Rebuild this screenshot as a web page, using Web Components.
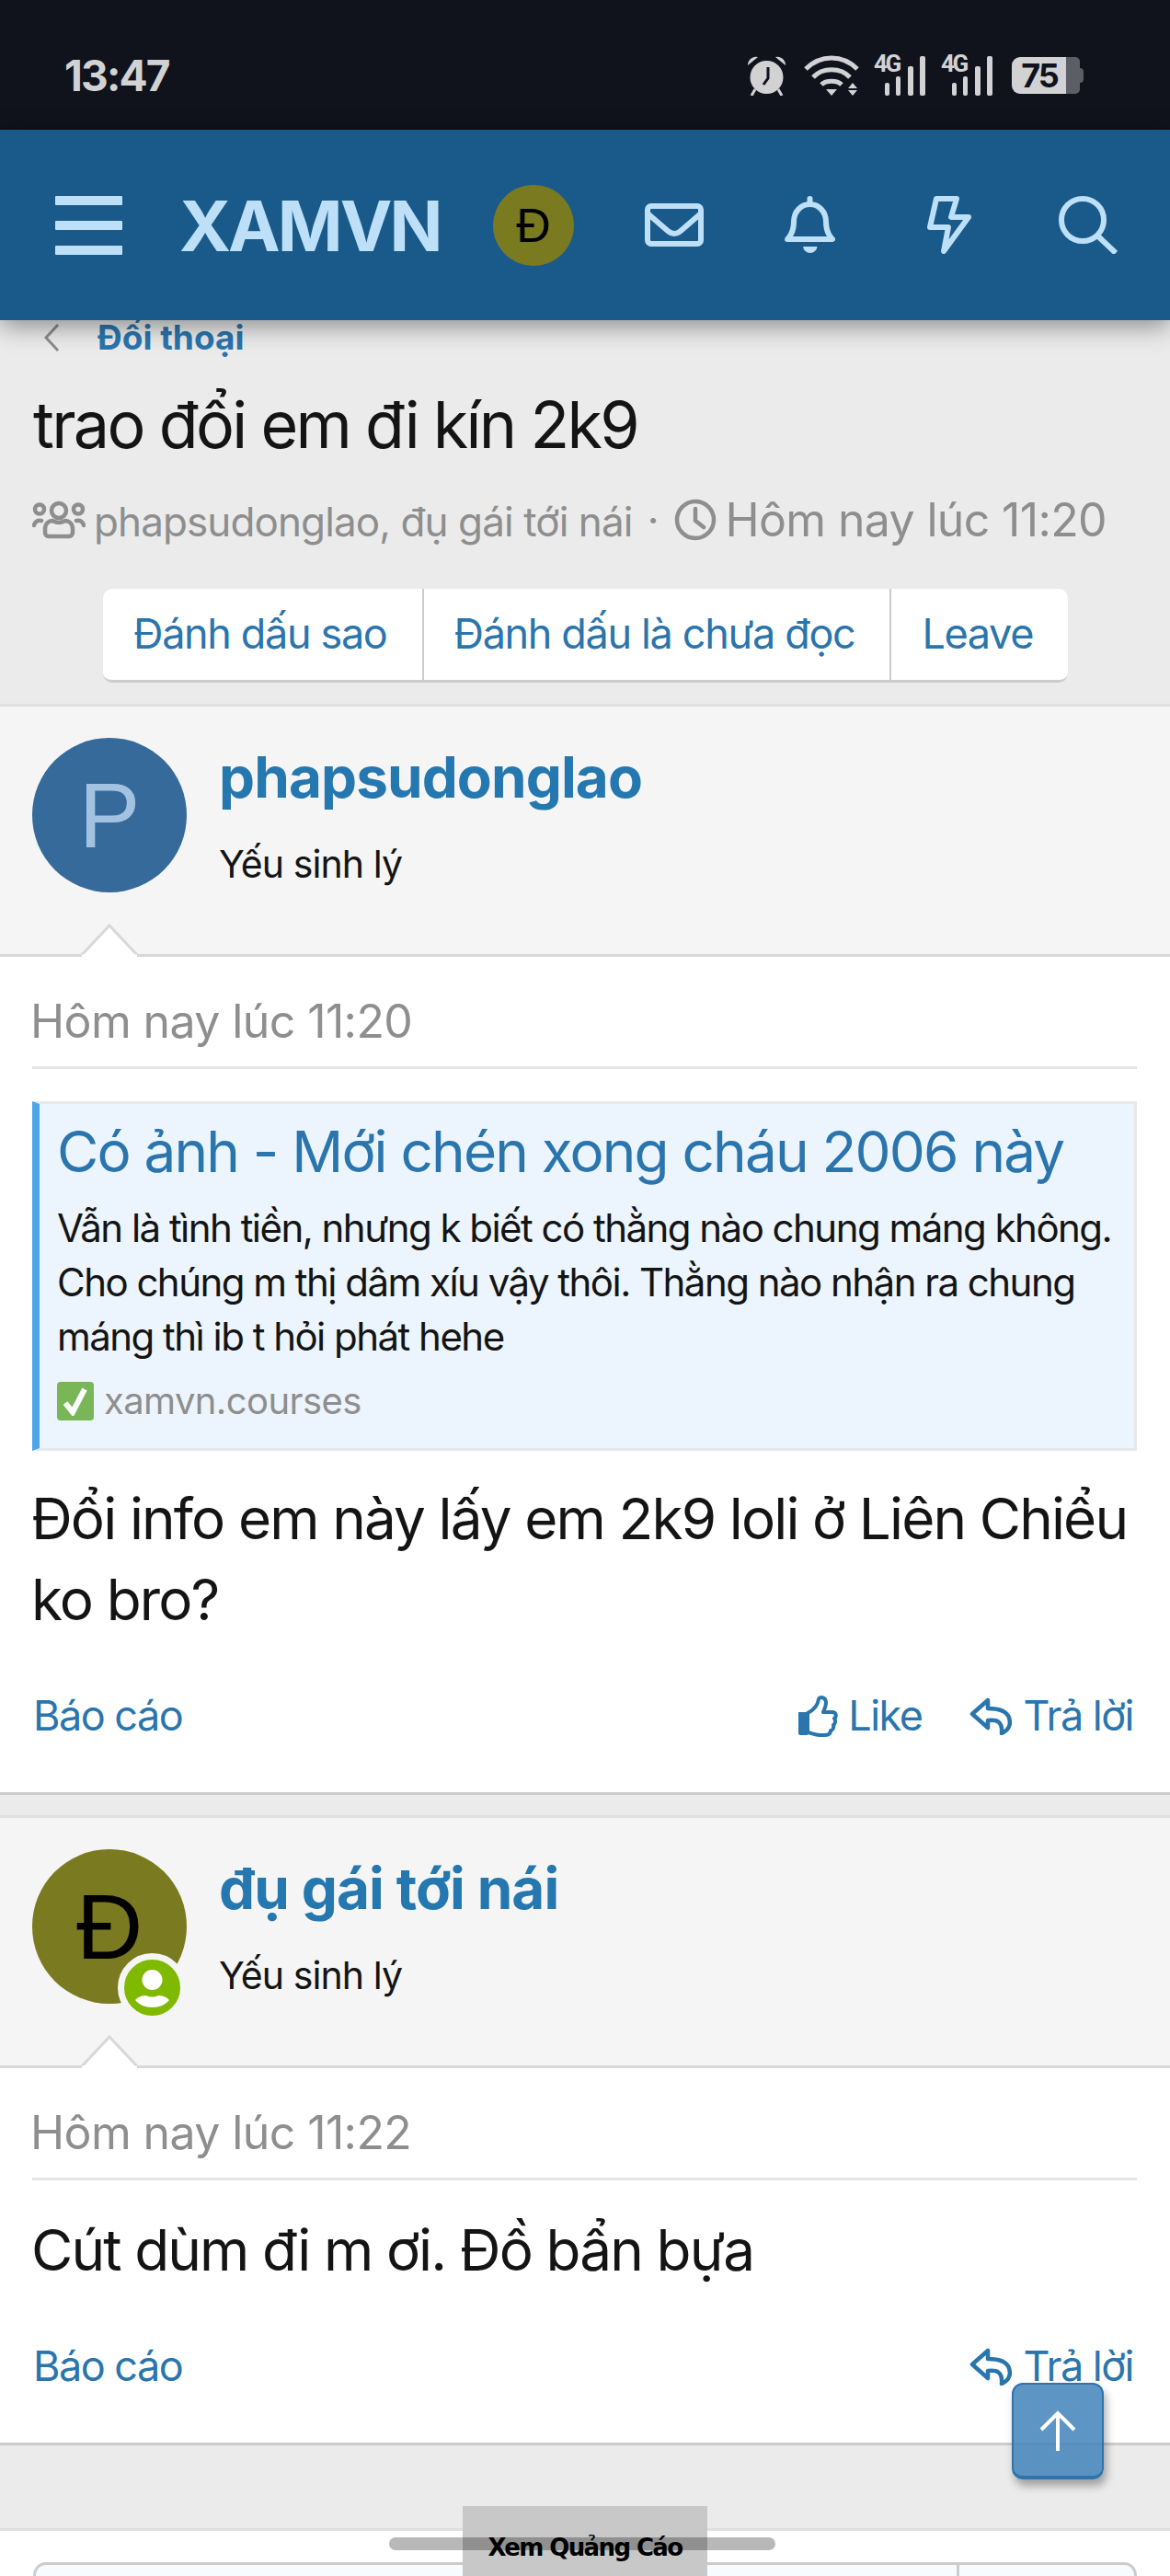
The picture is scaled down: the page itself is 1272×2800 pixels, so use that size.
<!DOCTYPE html>
<html lang="vi">
<head>
<meta charset="utf-8">
<title>trao đổi em đi kín 2k9</title>
<style>
  html, body { margin: 0; padding: 0; background: #ebebeb; }
  body {
    position: relative;
    width: 1272px;
    height: 2800px;
    overflow: hidden;
    font-family: Inter, Roboto, sans-serif;
    color: #141414;
  }
</style>
</head>
<body>
  <status-bar></status-bar>
  <app-header></app-header>
  <thread-head
    crumb="Đối thoại"
    title="trao đổi em đi kín 2k9"
    people="phapsudonglao, đụ gái tới nái"
    when="Hôm nay lúc 11:20"></thread-head>

  <forum-post name="phapsudonglao" rank="Yếu sinh lý" letter="P" tone="blue" when="Hôm nay lúc 11:20" like>
    <link-card
      title="Có ảnh - Mới chén xong cháu 2006 này"
      site="xamvn.courses">Vẫn là tình tiền, nhưng k biết có thằng nào chung máng không. Cho chúng m thị dâm xíu vậy thôi. Thằng nào nhận ra chung máng thì ib t hỏi phát hehe</link-card>
    Đổi info em này lấy em 2k9 loli ở Liên Chiểu ko bro?
  </forum-post>

  <forum-post name="đụ gái tới nái" rank="Yếu sinh lý" letter="Đ" tone="olive" when="Hôm nay lúc 11:22" online>
    Cút dùm đi m ơi. Đồ bẩn bựa
  </forum-post>

  <reply-box></reply-box>
  <page-overlays></page-overlays>

<script>
const ICONS = {
  mail: '<svg viewBox="0 0 64 47" width="64" height="47" fill="none" stroke="currentColor" stroke-width="6" stroke-linejoin="round"><rect x="3" y="3" width="58" height="41" rx="4"/><path d="M3 11l22 19q7 6 14 0l22-19"/></svg>',
  bell: '<svg viewBox="0 0 55 63" width="55" height="63" fill="none" stroke="currentColor" stroke-width="6" stroke-linejoin="round"><path d="M3 47c5-5 7-10 7-19 0-11 8-19 17.500-19S45 17 45 28c0 9 2 14 7 19z"/><path d="M27.500 3v6" stroke-linecap="round"/><path d="M20 55h15.500a7.800 8 0 0 1-15.500 0z" fill="currentColor" stroke="none"/></svg>',
  bolt: '<svg viewBox="0 0 48 63" width="48" height="63" fill="none" stroke="currentColor" stroke-width="6" stroke-linejoin="round"><path d="M10 3h22l-6 20h19L18 60l5-26H3z"/></svg>',
  search: '<svg viewBox="0 0 64 63" width="64" height="63" fill="none" stroke="currentColor" stroke-width="6"><circle cx="26" cy="26" r="23"/><path d="M42 43l20 19"/></svg>',
  users: '<svg viewBox="0 0 58 42" width="58" height="42" fill="none" stroke="currentColor" stroke-width="4.500" stroke-linecap="round"><circle cx="29" cy="11" r="8"/><circle cx="8" cy="9.500" r="5"/><circle cx="50" cy="9.500" r="5"/><path d="M14 35v-4c0-6 4-9 8-9 2 1 4.500 2 7 2s5-1 7-2c4 0 8 3 8 9v4a4 4 0 0 1-4 4H18a4 4 0 0 1-4-4z"/><path d="M2 27c1-4 4-6 8-5M56 27c-1-4-4-6-8-5"/></svg>',
  clock: '<svg viewBox="0 0 46 46" width="46" height="46" fill="none" stroke="currentColor" stroke-width="4.500" stroke-linecap="round"><circle cx="23" cy="23" r="20"/><path d="M23 11v13l9 7"/></svg>',
  thumb: '<svg viewBox="0 0 44 46" width="44" height="46"><path d="M1 19h10v25H3a2 2 0 0 1-2-2z" fill="currentColor"/><path d="M11 20c6-3 11-8 12-15 .500-3 8-3 8 4 0 4-2 7-3 10h10c4 0 5 5 2 7 2 2 1 6-1 7 1 3-1 6-3 6 0 4-3 5-6 5H24c-5 0-8-2-13-3z" fill="none" stroke="currentColor" stroke-width="4" stroke-linejoin="round"/></svg>',
  reply: '<svg viewBox="0 0 47 41" width="47" height="41" fill="none" stroke="currentColor" stroke-width="4.500" stroke-linejoin="round"><path d="M20 3L3 18l17 15v-8c10-1 16 1 15 14 9-4 10-11 8-17-3-8-13-10-23-10z"/></svg>',
};

const SIGNAL = '<svg width="58" height="44" viewBox="0 0 58 44" fill="currentColor"><rect x="12" y="30" width="5" height="14" rx="2"/><rect x="24" y="23" width="5" height="21" rx="2"/><rect x="37" y="12" width="6" height="32" rx="2"/><rect x="50" y="1" width="6" height="43" rx="2"/></svg>';

class StatusBar extends HTMLElement {
  constructor() {
    super();
    this.attachShadow({ mode: 'open' }).innerHTML = `
      <style>
        :host { display: flex; height: 141px; background: #10131c; color: #d2d2d5; padding-left: 70px; align-items: center; box-sizing: border-box; }
        .time { font: 700 46px/1 Inter, sans-serif; margin-top: 22px; width: 741px; letter-spacing: -1.800px; }
        .icons { display: flex; align-items: center; margin-top: 22px; }
        svg { display: block; }
        .net { position: relative; width: 58px; height: 44px; margin-right: 15px; }
        .net b { position: absolute; left: 0; top: -4px; font: 700 26px/1 Roboto, sans-serif; letter-spacing: -2.500px; }
        .net svg { position: absolute; left: 0; top: 0; }
        .batt { display: flex; align-items: center; justify-content: center; width: 74px; height: 40px; border-radius: 9px 5px 5px 9px; box-sizing: border-box; background: linear-gradient(90deg, #d2d2d5 80%, #5c5e66 80%); color: #10131c; font: 700 36px/40px Inter, sans-serif; letter-spacing: -2px; padding-right: 16px; padding-left: 2px; }
        .nub { width: 4px; height: 16px; background: #5c5e66; border-radius: 0 4px 4px 0; }
      </style>
      <div class="time">13:47</div>
      <div class="icons">
        <svg style="margin-right:18px" width="45" height="44" viewBox="0 0 45 44" fill="currentColor"><circle cx="22.500" cy="24" r="18"/><path d="M2 11a9 9 0 0 1 11-9zM43 11a9 9 0 0 0-11-9z"/><path d="M10 37l-4 7M35 37l4 7" stroke="currentColor" stroke-width="3"/><path d="M24 13v12l-5 7" fill="none" stroke="#10131c" stroke-width="3"/></svg>
        <svg style="margin-right:16px" width="60" height="44" viewBox="0 0 60 44" fill="none" stroke="currentColor" stroke-width="5"><path d="M2 15c16-16 40-16 56 0M10 24c10-11 30-11 40 0M19 32c5-5 17-5 22 0"/><path d="M30 44l-6-7h12zM53 30l-5 6h10zM53 44l-5-6h10z" fill="currentColor" stroke="none"/></svg>
        <div class="net"><b>4G</b>${SIGNAL}</div>
        <div class="net" style="margin-right:19px"><b>4G</b>${SIGNAL}</div>
        <div class="batt">75</div><div class="nub"></div>
      </div>`;
  }
}

class AppHeader extends HTMLElement {
  constructor() {
    super();
    this.attachShadow({ mode: 'open' }).innerHTML = `
      <style>
        :host { display: flex; align-items: center; height: 207px; background: #1a5a8a; color: #bde0f8; box-shadow: 0 6px 26px rgba(0,0,0,.42); position: relative; z-index: 2; padding-left: 60px; box-sizing: border-box; }
        svg { display: block; }
        .burger { display: flex; flex-direction: column; gap: 17px; width: 73px; margin-right: 62px; }
        .burger i { height: 10px; background: currentColor; border-radius: 1px; }
        .logo { font: 700 76px/1 Inter, sans-serif; width: 341px; letter-spacing: -3px; }
        .avatar { width: 88px; height: 88px; border-radius: 50%; background: #7a7a20; color: #000; display: flex; align-items: center; justify-content: center; font: 400 52px/1 "Liberation Sans", sans-serif; margin-right: 77px; }
        .mail { margin-right: 88px; }
        .bell { margin-right: 100px; }
        .bolt { margin-right: 95px; }
      </style>
      <div class="burger"><i></i><i></i><i></i></div>
      <div class="logo">XAMVN</div>
      <div class="avatar">Đ</div>
      <div class="mail">${ICONS.mail}</div>
      <div class="bell">${ICONS.bell}</div>
      <div class="bolt">${ICONS.bolt}</div>
      <div class="search">${ICONS.search}</div>`;
  }
}

class ThreadHead extends HTMLElement {
  connectedCallback() {
    if (this.shadowRoot) return;
    const attr = name => this.getAttribute(name) ?? '';
    this.attachShadow({ mode: 'open' }).innerHTML = `
      <style>
        :host { display: block; height: 417px; background: #ebebeb; }
        .crumb { display: flex; align-items: center; height: 38px; padding-left: 48px; color: #2a75ad; font: 700 37px/38px Inter, sans-serif; }
        .crumb svg { margin-right: 41px; color: #8c8c8c; }
        h1 { margin: 36px 0 0 36px; font: 400 70px/80px Inter, sans-serif; letter-spacing: -2.700px; color: #141414; }
        .meta { display: flex; align-items: center; margin: 33px 0 0 35px; color: #8e8e8e; height: 60px; white-space: nowrap; }
        .meta svg { display: block; flex: none; }
        .people { font-size: 44px; letter-spacing: -.9px; margin-left: 9px; margin-top: 3px; }
        .dot { font-size: 44px; width: 45px; text-align: center; }
        .when { font-size: 50px; letter-spacing: -.65px; margin-left: 10px; }
        .btns { display: flex; width: max-content; margin: 45px 0 0 112px; background: #fff; border-radius: 10px; border-bottom: 3px solid #ccc; height: 102px; box-sizing: border-box; overflow: hidden; }
        .btns span { color: #2a75ad; font-size: 45px; letter-spacing: -1.350px; line-height: 98px; padding: 0 38px 0 33px; border-left: 2px solid #ccc; }
        .btns span:first-child { border-left: 0; }
      </style>
      <div class="crumb"><svg width="17" height="30" viewBox="0 0 17 30" fill="none" stroke="currentColor" stroke-width="3"><path d="M15 1L2 15l13 14"/></svg>${attr('crumb')}</div>
      <h1>${attr('title')}</h1>
      <div class="meta">${ICONS.users}<span class="people">${attr('people')}</span><span class="dot">·</span>${ICONS.clock}<span class="when">${attr('when')}</span></div>
      <div class="btns"><span>Đánh dấu sao</span><span>Đánh dấu là chưa đọc</span><span>Leave</span></div>`;
  }
}

class ForumPost extends HTMLElement {
  connectedCallback() {
    if (this.shadowRoot) return;
    const attr = name => this.getAttribute(name) ?? '';
    const badge = this.hasAttribute('online') ? `
      <span class="badge"><svg width="61" height="61" viewBox="0 0 61 61" fill="#fff"><circle cx="30.500" cy="22" r="11"/><path d="M12 44c3-4 9-5 12-5 2 1 4 1.500 6.500 1.500s4.500-.5 6.500-1.500c3 0 9 1 12 5-4 5-11 8-18.500 8S16 49 12 44z"/></svg></span>` : '';
    const like = this.hasAttribute('like') ? `<span class="act">${ICONS.thumb}Like</span>` : '';
    this.attachShadow({ mode: 'open' }).innerHTML = `
      <style>
        :host { display: block; background: #fff; border-top: 3px solid #e0e0e0; border-bottom: 3px solid #ccc; margin-bottom: 22px; }
        .user { position: relative; display: flex; height: 272px; box-sizing: border-box; padding: 34px 0 0 35px; background: #f5f5f5; border-bottom: 3px solid #d8d8d8; }
        .avatar { position: relative; width: 168px; height: 168px; flex: none; border-radius: 50%; display: flex; align-items: center; justify-content: center; font: 400 100px/1 "Liberation Sans", sans-serif; margin-right: 35px; }
        .blue { background: #366a9b; color: #a3c1e0; }
        .olive { background: #7a7a20; color: #000; }
        .badge { position: absolute; left: 93px; top: 113px; width: 61px; height: 61px; border: 7px solid #f5f5f5; border-radius: 50%; background: #7fb900; display: block; overflow: hidden; }
        .name { font: 700 62px/70px Inter, sans-serif; letter-spacing: -.9px; color: #2577b0; margin-top: 8px; }
        .rank { font: 400 41px/48px Inter, sans-serif; letter-spacing: -.9px; margin-top: 35px; }
        .arrow { position: absolute; left: 86px; bottom: -3px; display: block; }
        .body { padding: 0 36px; }
        .when { font-size: 50px; letter-spacing: -.6px; line-height: 60px; color: #8e8e8e; padding: 40px 0 19px 3px; border-bottom: 3px solid #e5e5e5; margin-left: -1px; text-indent: -5px; }
        .text { display: flow-root; font-size: 62px; letter-spacing: -1.870px; line-height: 88px; margin: 32px 0 0 -2px; }
        .bar { display: flex; align-items: center; justify-content: space-between; color: #2a75ad; font-size: 45px; letter-spacing: -1.500px; line-height: 60px; margin-top: 52px; padding: 0 4px 53px 0; }
        .acts { display: flex; gap: 52px; }
        .act { display: flex; align-items: center; gap: 11px; }
        svg { display: block; }
      </style>
      <div class="user">
        <div class="avatar ${attr('tone')}">${attr('letter')}${badge}</div>
        <div>
          <div class="name">${attr('name')}</div>
          <div class="rank">${attr('rank')}</div>
        </div>
        <svg class="arrow" width="66" height="36" viewBox="0 0 66 36"><path d="M1 36L33 2l32 34" fill="#fff" stroke="#d8d8d8" stroke-width="3"/><path d="M3 35h60" stroke="#fff" stroke-width="3"/></svg>
      </div>
      <div class="body">
        <div class="when">${attr('when')}</div>
        <div class="text"><slot></slot></div>
        <div class="bar"><span>Báo cáo</span><span class="acts">${like}<span class="act">${ICONS.reply}Trả lời</span></span></div>
      </div>`;
  }
}

class LinkCard extends HTMLElement {
  connectedCallback() {
    if (this.shadowRoot) return;
    const attr = name => this.getAttribute(name) ?? '';
    this.attachShadow({ mode: 'open' }).innerHTML = `
      <style>
        :host { display: block; box-sizing: border-box; height: 380px; margin: 3px 0 30px 1px; background: #ecf5fd; border: 3px solid #e6e8ea; border-left: 8px solid #4ea5ea; padding: 15px 20px 0 19px; }
        .title { font-size: 62px; letter-spacing: -1.800px; line-height: 74px; color: #2a75ad; white-space: nowrap; }
        .desc { font-size: 42px; letter-spacing: -1.530px; line-height: 59px; color: #141414; margin-top: 16px; }
        .site { display: flex; align-items: center; color: #8e8e8e; font-size: 40px; letter-spacing: -.6px; line-height: 50px; margin-top: 16px; gap: 11px; }
        .check { width: 40px; height: 42px; background: #78b657; border-radius: 4px; display: flex; align-items: center; justify-content: center; }
      </style>
      <div class="title">${attr('title')}</div>
      <div class="desc"><slot></slot></div>
      <div class="site"><span class="check"><svg width="28" height="32" viewBox="0 0 28 32" fill="none" stroke="#fff" stroke-width="6"><path d="M3 18l8 10L24 3"/></svg></span>${attr('site')}</div>`;
  }
}

class ReplyBox extends HTMLElement {
  constructor() {
    super();
    this.attachShadow({ mode: 'open' }).innerHTML = `
      <style>
        :host { display: block; background: #fff; border-top: 3px solid #e0e0e0; margin-top: 90px; padding: 34px 36px 0; height: 60px; }
        .box { height: 60px; background: #f7fbfe; border: 3px solid #ccc; border-bottom: 0; border-radius: 14px 14px 0 0; display: flex; justify-content: flex-end; }
        .box i { width: 190px; border-left: 3px solid #ccc; }
      </style>
      <div class="box"><i></i></div>`;
  }
}

class PageOverlays extends HTMLElement {
  constructor() {
    super();
    this.attachShadow({ mode: 'open' }).innerHTML = `
      <style>
        .up { position: absolute; left: 1100px; top: 2590px; width: 100px; height: 105px; box-sizing: border-box; border-radius: 12px; background: rgba(66,133,188,.86); border: 2px solid #2f74ad; border-bottom-width: 4px; box-shadow: 3px 7px 10px rgba(0,0,0,.32); display: flex; align-items: center; justify-content: center; }
        .ad { position: absolute; left: 503px; top: 2724px; width: 266px; height: 76px; background: #c8c8c8; color: #000; font: 700 26px/1 "DejaVu Sans", sans-serif; text-align: center; padding-top: 32px; box-sizing: border-box; white-space: nowrap; letter-spacing: -1.600px; }
        .pill { position: absolute; left: 423px; top: 2758px; width: 420px; height: 14px; border-radius: 7px; background: rgba(0,0,0,.28); }
      </style>
      <div class="up"><svg width="44" height="44" viewBox="0 0 44 44" fill="none" stroke="#fff" stroke-width="4"><path d="M22 44V3M4 21L22 3l18 18"/></svg></div>
      <div class="ad">Xem Quảng Cáo</div>
      <div class="pill"></div>`;
  }
}

customElements.define('status-bar', StatusBar);
customElements.define('app-header', AppHeader);
customElements.define('thread-head', ThreadHead);
customElements.define('forum-post', ForumPost);
customElements.define('link-card', LinkCard);
customElements.define('reply-box', ReplyBox);
customElements.define('page-overlays', PageOverlays);
</script>
</body>
</html>
